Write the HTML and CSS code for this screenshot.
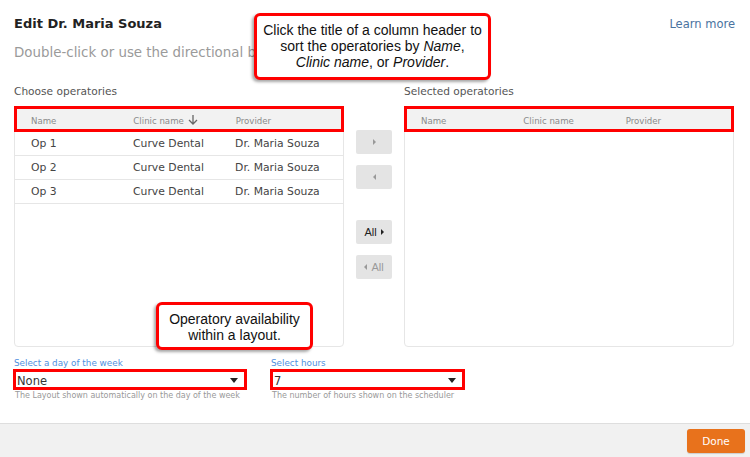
FILE: index.html
```html
<!DOCTYPE html>
<html>
<head>
<meta charset="utf-8">
<title>Edit Dr. Maria Souza</title>
<link rel="stylesheet" href="styles.css">
</head>
<body>
<div class="dialog">
  <div class="content">
    <div class="head">
      <h1 class="title">Edit Dr. Maria Souza</h1>
      <a class="learn" href="#">Learn more</a>
    </div>
    <p class="subtitle">Double-click or use the directional buttons to move operatories.</p>

    <div class="lists">
      <div class="list-col">
        <div class="list-label">Choose operatories</div>
        <div class="panel">
          <div class="thead mark">
            <span class="c1">Name</span>
            <span class="c2">Clinic name
              <svg class="sort" width="12" height="12" viewBox="0 0 12 12"><path d="M6 1v9M2 6l4 4 4-4" fill="none" stroke="#666" stroke-width="1.3"/></svg>
            </span>
            <span class="c3">Provider</span>
          </div>
          <div class="row"><span class="c1">Op 1</span><span class="c2">Curve Dental</span><span class="c3">Dr. Maria Souza</span></div>
          <div class="row"><span class="c1">Op 2</span><span class="c2">Curve Dental</span><span class="c3">Dr. Maria Souza</span></div>
          <div class="row"><span class="c1">Op 3</span><span class="c2">Curve Dental</span><span class="c3">Dr. Maria Souza</span></div>
        </div>
      </div>

      <div class="moves">
        <button class="mv"><span class="tri-r"></span></button>
        <button class="mv gap1"><span class="tri-l"></span></button>
        <button class="mv gap2 on">All <span class="tri-r dark"></span></button>
        <button class="mv gap1 off"><span class="tri-l"></span> All</button>
      </div>

      <div class="list-col">
        <div class="list-label">Selected operatories</div>
        <div class="panel">
          <div class="thead mark">
            <span class="c1">Name</span>
            <span class="c2">Clinic name</span>
            <span class="c3">Provider</span>
          </div>
        </div>
      </div>
    </div>

    <div class="fields">
      <div class="field day">
        <label class="flabel">Select a day of the week</label>
        <div class="select mark"><span>None</span><span class="arrow"></span></div>
        <div class="help">The Layout shown automatically on the day of the week</div>
      </div>
      <div class="field hours">
        <label class="flabel">Select hours</label>
        <div class="select mark"><span>7</span><span class="arrow"></span></div>
        <div class="help">The number of hours shown on the scheduler</div>
      </div>
    </div>
  </div>

  <div class="footer">
    <button class="done">Done</button>
  </div>

  <div class="callout callout-sort">Click the title of a column header to<br>sort the operatories by <i>Name</i>,<br><i>Clinic name</i>, or <i>Provider</i>.</div>
  <div class="callout callout-layout">Operatory availability<br>within a layout.</div>
</div>
</body>
</html>
```

FILE: styles.css
```css
* { box-sizing: border-box; }

html, body {
  margin: 0;
  padding: 0;
  background: #fff;
}

body {
  font-family: "DejaVu Sans", Verdana, sans-serif;
  color: #333;
}

.dialog {
  position: relative;
  width: 750px;
  height: 457px;
  overflow: hidden;
  display: flex;
  flex-direction: column;
}

.content {
  flex: 1;
  padding: 15px 15px 0 14px;
}

.head {
  display: flex;
  justify-content: space-between;
  align-items: baseline;
}

.title {
  margin: 0;
  font-size: 13px;
  font-weight: bold;
  color: #222;
  line-height: 16px;
}

.learn {
  font-size: 11.5px;
  color: #4a73a0;
  text-decoration: none;
  margin-top: 2px;
}

.subtitle {
  margin: 12px 0 0;
  font-size: 13.4px;
  color: #9a9a9a;
  line-height: 18px;
}

.lists {
  display: flex;
  margin-top: 22px;
}

.list-col {
  width: 330px;
  display: flex;
  flex-direction: column;
}

.list-label {
  font-size: 10.6px;
  color: #555;
  line-height: 14px;
  height: 22px;
}

.panel {
  height: 241px;
  border: 1px solid #e6e6e6;
  border-radius: 4px;
}

.thead, .row {
  display: flex;
  align-items: center;
  padding-left: 16px;
}

.thead {
  height: 25px;
  background: #f2f2f2;
  font-size: 8.6px;
  color: #8a8a8a;
  padding-top: 3px;
}

.mark {
  outline: 3px solid #f00;
  outline-offset: -3px;
}

.panel .thead.mark {
  margin: -1px -1px 0 -1px;
  padding-left: 17px;
  height: 26px;
}

.row {
  height: 24px;
  border-bottom: 1px solid #e6e6e6;
  font-size: 10.8px;
  color: #444;
}

.c1 { width: 104px; }
.c2 { width: 104px; display: flex; align-items: center; gap: 3px; }
.c3 { width: 110px; }

.sort { margin-top: -2px; }

.moves {
  width: 60px;
  display: flex;
  flex-direction: column;
  align-items: center;
  padding-top: 46px;
}

.mv {
  width: 36px;
  height: 24px;
  border: none;
  border-radius: 2px;
  background: #e4e4e4;
  font-family: "Liberation Sans", Arial, sans-serif;
  font-size: 11px;
  color: #222;
  padding: 0;
  display: flex;
  align-items: center;
  justify-content: center;
  gap: 4px;
}

.mv.gap1 { margin-top: 11px; }
.mv.gap2 { margin-top: 31px; }
.mv.off { color: #9a9a9a; }

.tri-r, .tri-l {
  width: 0;
  height: 0;
  border-top: 3px solid transparent;
  border-bottom: 3px solid transparent;
}
.tri-r { border-left: 3px solid #999; }
.tri-l { border-right: 3px solid #999; }
.tri-r.dark { border-left-color: #222; }

.fields {
  display: flex;
  margin-top: 11px;
}

.field {
  display: flex;
  flex-direction: column;
}

.day { width: 234px; margin-left: -1px; }
.hours { width: 195px; margin-left: 23px; }

.flabel {
  font-size: 8.8px;
  color: #4f8fe0;
  line-height: 11px;
  padding-left: 1px;
}

.select {
  height: 21px;
  display: flex;
  align-items: center;
  justify-content: space-between;
  padding: 2px 9px 0 4px;
  font-size: 11.5px;
  color: #333;
}

.arrow {
  width: 0;
  height: 0;
  border-left: 4px solid transparent;
  border-right: 4px solid transparent;
  border-top: 5px solid #222;
}

.help {
  font-size: 8px;
  color: #999;
  line-height: 12px;
  padding-left: 2px;
  white-space: nowrap;
}

.footer {
  height: 34px;
  background: #f1f1f1;
  border-top: 1px solid #dedede;
  display: flex;
  justify-content: flex-end;
  align-items: center;
  padding-right: 5px;
}

.done {
  width: 58px;
  height: 24px;
  border: none;
  border-radius: 3px;
  background: #e8721c;
  color: #fff;
  font-family: "DejaVu Sans", Verdana, sans-serif;
  font-size: 10.5px;
  box-shadow: 0 1px 1px rgba(0,0,0,0.15);
}

/* annotation callouts layered over the dialog */
.callout {
  position: absolute;
  background: #fff;
  border: 3px solid #f00;
  border-radius: 6px;
  box-shadow: -2px 2px 3px rgba(0,0,0,0.35);
  font-family: "Liberation Sans", Arial, sans-serif;
  font-size: 14px;
  line-height: 16px;
  color: #111;
  text-align: center;
  white-space: nowrap;
}

.callout-sort {
  left: 254px;
  top: 13px;
  width: 237px;
  height: 67px;
  padding: 6px 0 0;
}

.callout-layout {
  left: 156px;
  top: 302px;
  width: 157px;
  height: 48px;
  padding: 6px 0 0;
}
```
